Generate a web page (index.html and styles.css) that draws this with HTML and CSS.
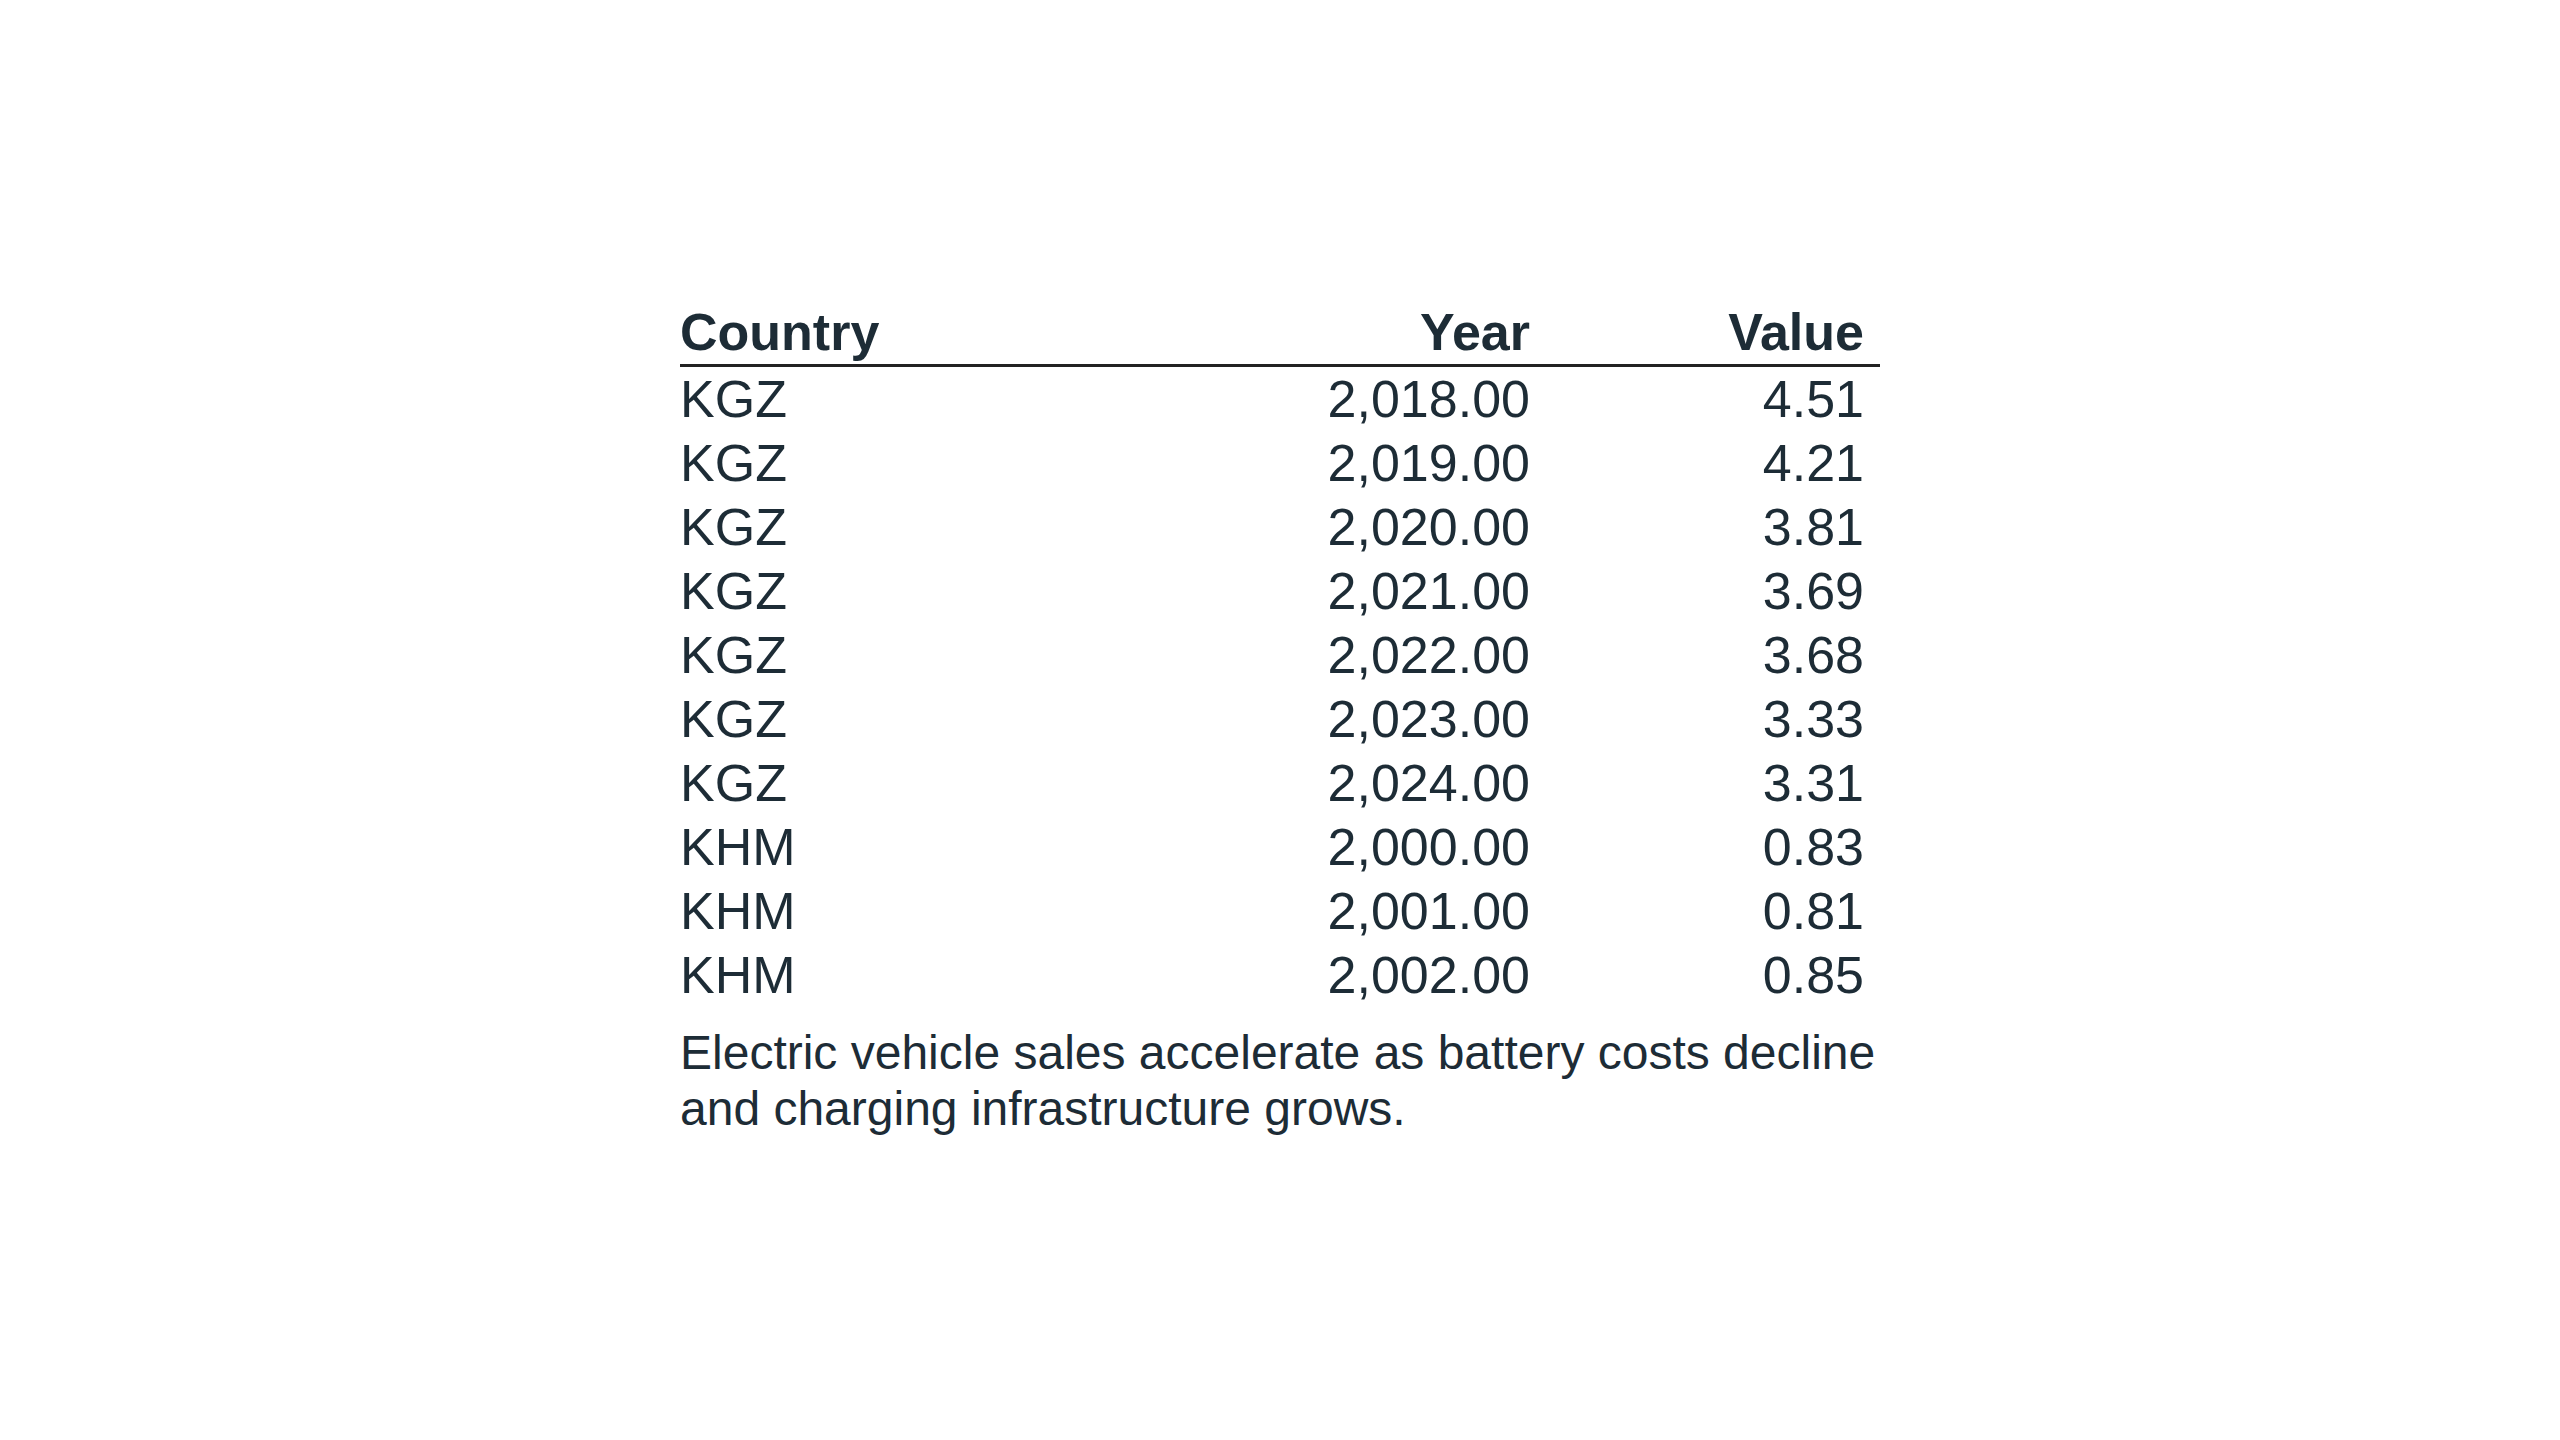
FILE: index.html
```html
<!DOCTYPE html>
<html lang="en">
<head>
<meta charset="utf-8">
<title>Electric vehicle table</title>
<link rel="stylesheet" href="styles.css">
</head>
<body>
<main class="page">
  <table class="data-table">
    <colgroup>
      <col class="col-country">
      <col class="col-year">
      <col class="col-value">
    </colgroup>
    <thead>
      <tr>
        <th class="left">Country</th>
        <th class="num">Year</th>
        <th class="num">Value</th>
      </tr>
    </thead>
    <tbody>
      <tr><td class="left">KGZ</td><td class="num">2,018.00</td><td class="num">4.51</td></tr>
      <tr><td class="left">KGZ</td><td class="num">2,019.00</td><td class="num">4.21</td></tr>
      <tr><td class="left">KGZ</td><td class="num">2,020.00</td><td class="num">3.81</td></tr>
      <tr><td class="left">KGZ</td><td class="num">2,021.00</td><td class="num">3.69</td></tr>
      <tr><td class="left">KGZ</td><td class="num">2,022.00</td><td class="num">3.68</td></tr>
      <tr><td class="left">KGZ</td><td class="num">2,023.00</td><td class="num">3.33</td></tr>
      <tr><td class="left">KGZ</td><td class="num">2,024.00</td><td class="num">3.31</td></tr>
      <tr><td class="left">KHM</td><td class="num">2,000.00</td><td class="num">0.83</td></tr>
      <tr><td class="left">KHM</td><td class="num">2,001.00</td><td class="num">0.81</td></tr>
      <tr><td class="left">KHM</td><td class="num">2,002.00</td><td class="num">0.85</td></tr>
    </tbody>
    <caption class="note">Electric vehicle sales accelerate as battery costs decline and charging infrastructure grows.</caption>
  </table>
</main>
</body>
</html>
```

FILE: styles.css
```css
html, body {
  margin: 0;
  padding: 0;
  background: #ffffff;
}

body {
  font-family: "Liberation Sans", Arial, sans-serif;
  color: #1d2c36;
}

.page {
  box-sizing: border-box;
  width: 100%;
  min-height: 100vh;
  padding-top: 300px;
  display: flex;
  align-items: flex-start;
  justify-content: center;
}

.data-table {
  width: 1200px;
  border-collapse: collapse;
  table-layout: fixed;
  font-size: 52px;
  line-height: 64px;
}

.col-country { width: 534px; }
.col-year { width: 332px; }
.col-value { width: 334px; }

.data-table th,
.data-table td {
  padding: 0 16px 0 0;
  height: 64px;
  white-space: nowrap;
}

.data-table th {
  font-weight: 700;
  border-bottom: 3px solid #222222;
}

.left { text-align: left; }
.num { text-align: right; }

.note {
  caption-side: bottom;
  text-align: left;
  font-size: 48px;
  line-height: 56px;
  padding-top: 18px;
}
```
